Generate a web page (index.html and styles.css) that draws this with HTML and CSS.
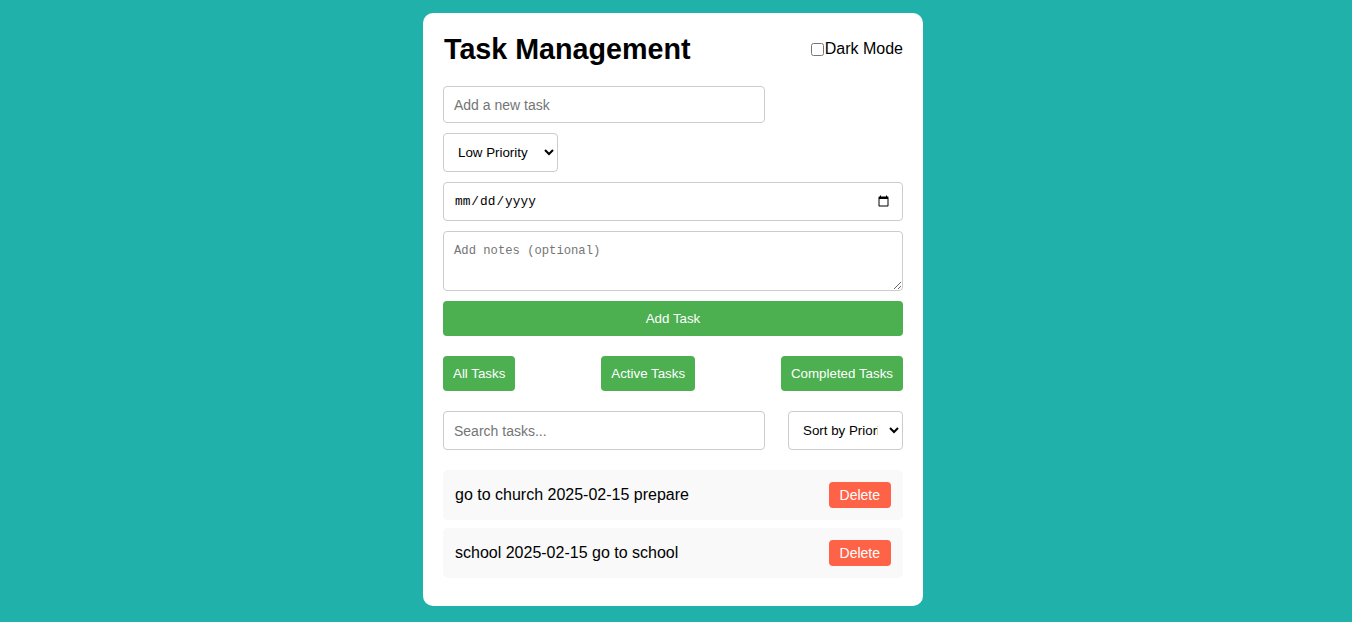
FILE: index.html
```html
<!DOCTYPE html>
<html lang="en">
<head>
<meta charset="UTF-8">
<title>Task Management</title>
<link rel="stylesheet" href="styles.css">
</head>
<body>
<div class="card">
  <div class="header">
    <h1 class="title">Task Management</h1>
    <label class="dark-toggle"><input type="checkbox" class="dark-check">Dark Mode</label>
  </div>
  <div class="form">
    <input type="text" class="text-input task-input" placeholder="Add a new task">
    <select class="select-input">
      <option>Low Priority</option>
      <option>Medium Priority</option>
      <option>High Priority</option>
    </select>
    <input type="date" class="date-input">
    <textarea class="notes-input" placeholder="Add notes (optional)"></textarea>
    <button class="btn btn-add">Add Task</button>
  </div>
  <div class="filters">
    <button class="btn">All Tasks</button>
    <button class="btn">Active Tasks</button>
    <button class="btn">Completed Tasks</button>
  </div>
  <div class="search-row">
    <input type="text" class="text-input search-input" placeholder="Search tasks...">
    <select class="select-input">
      <option>Sort by Priority</option>
      <option>Sort by Date</option>
    </select>
  </div>
  <ul class="task-list">
    <li class="task-item"><span class="task-text">go to church 2025-02-15 prepare</span><button class="btn-delete">Delete</button></li>
    <li class="task-item"><span class="task-text">school 2025-02-15 go to school</span><button class="btn-delete">Delete</button></li>
  </ul>
</div>
</body>
</html>
```

FILE: styles.css
```css
* {
  box-sizing: border-box;
}

html, body {
  margin: 0;
  padding: 0;
}

body {
  background: #20b2aa;
  font-family: "Liberation Sans", Arial, sans-serif;
  display: flex;
  justify-content: center;
  align-items: flex-start;
  padding: 13px 6px 0 0;
  min-height: 622px;
}

.card {
  width: 500px;
  background: #ffffff;
  border-radius: 10px;
  padding: 20px;
}

.header {
  display: flex;
  justify-content: space-between;
  align-items: center;
  margin-bottom: 21px;
}

.title {
  margin: 0 0 0 1px;
  font-size: 28.7px;
  font-weight: bold;
  line-height: 32px;
  color: #000;
}

.dark-toggle {
  display: flex;
  align-items: center;
  font-size: 16px;
  color: #000;
}

.dark-check {
  margin: 1px 1px 0 0;
  width: 13px;
  height: 13px;
}

.form {
  display: flex;
  flex-direction: column;
  align-items: flex-start;
  gap: 10px;
}

.text-input {
  font-family: "Liberation Sans", Arial, sans-serif;
  font-size: 14px;
  padding: 0 10px;
  border: 1px solid #ccc;
  border-radius: 4px;
  color: #000;
  background: #fff;
  outline: none;
}

.text-input::placeholder {
  color: #757575;
}

.task-input {
  width: 70%;
  height: 37px;
}

.select-input {
  width: 25%;
  height: 39px;
  padding: 0 8px 0 10px;
  font-family: "Liberation Sans", Arial, sans-serif;
  font-size: 13.33px;
  border: 1px solid #ccc;
  border-radius: 4px;
  background: #fff;
  color: #000;
}

.date-input {
  width: 100%;
  height: 39px;
  padding: 0 10px;
  font-family: "Liberation Mono", monospace;
  font-size: 12.8px;
  border: 1px solid #ccc;
  border-radius: 4px;
  background: #fff;
  color: #000;
}

.notes-input {
  width: 100%;
  height: 60px;
  padding: 12px 10px 10px;
  font-family: "Liberation Mono", monospace;
  font-size: 12.2px;
  border: 1px solid #ccc;
  border-radius: 4px;
  resize: vertical;
  display: block;
}

.notes-input::placeholder {
  color: #757575;
}

.btn {
  background: #4caf50;
  color: #fff;
  border: none;
  border-radius: 4px;
  padding: 0 10px;
  height: 35px;
  font-family: "Liberation Sans", Arial, sans-serif;
  font-size: 13.33px;
  cursor: pointer;
}

.btn-add {
  width: 100%;
}

.filters {
  display: flex;
  justify-content: space-between;
  margin-top: 20px;
}

.search-row {
  display: flex;
  justify-content: space-between;
  margin-top: 20px;
}

.search-input {
  width: 70%;
  height: 39px;
}

.task-list {
  list-style: none;
  margin: 20px 0 0;
  padding: 0;
}

.task-item {
  display: flex;
  justify-content: space-between;
  align-items: center;
  background: #f9f9f9;
  border-radius: 5px;
  padding: 12px;
  margin-bottom: 8px;
  font-size: 16px;
  color: #000;
}

.btn-delete {
  background: #ff6347;
  color: #fff;
  border: none;
  border-radius: 4px;
  height: 26px;
  padding: 0 11px;
  font-family: "Liberation Sans", Arial, sans-serif;
  font-size: 14px;
  cursor: pointer;
}
```
